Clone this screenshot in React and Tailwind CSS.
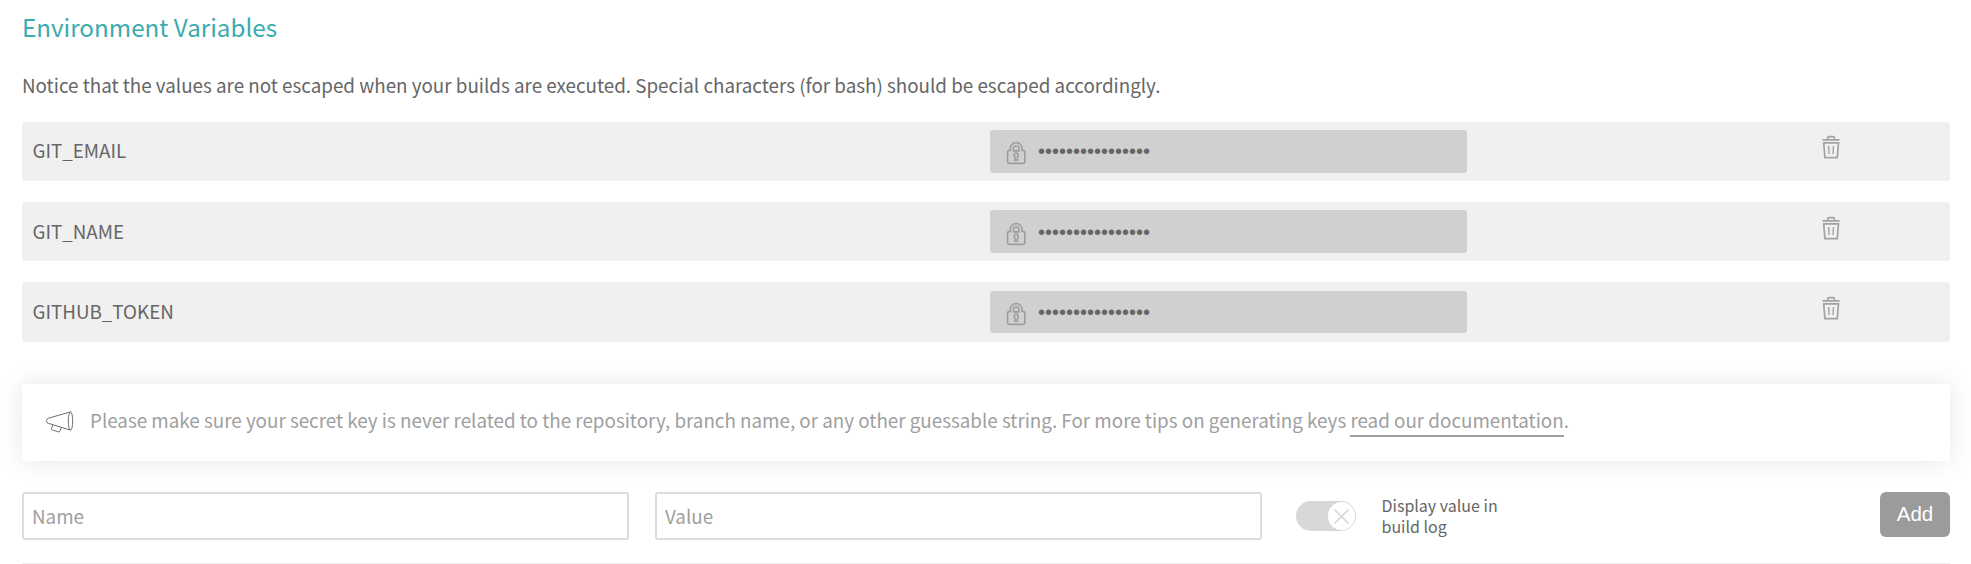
const variables = [
  { name: "GIT_EMAIL", shift: "pt-0", row: "h-[59px]", box: "mt-2 h-[43px]" },
  { name: "GIT_NAME", shift: "pt-px", row: "h-[59px]", box: "mt-2 h-[43px]" },
  { name: "GITHUB_TOKEN", shift: "pt-px", row: "h-[60px]", box: "mt-[9px] h-[42px]", inner: "-mt-px" },
];

function LockIcon() {
  return (
    <svg className="h-[24px] w-[20px] shrink-0" viewBox="0 0 20 24" fill="none" stroke="#9d9d9d" strokeWidth="1.6">
      <path d="M4.4 9.4V7.4a5.8 5.8 0 0 1 11.6 0v2h1a1.8 1.8 0 0 1 1.8 1.8v9.6a1.6 1.6 0 0 1-1.6 1.6H3.2a1.6 1.6 0 0 1-1.6-1.6v-9.6a1.8 1.8 0 0 1 1.8-1.8z" />
      <path d="M7.5 9.9V7.4a2.7 2.7 0 0 1 5.4 0v2.5z" />
      <path d="M9 15.9a2.1 2.1 0 1 1 2.4 0v3.4H9z" />
    </svg>
  );
}

function TrashIcon() {
  return (
    <svg className="h-[24px] w-[18px]" viewBox="0 0 18 24" fill="none" stroke="#a3a3a3" strokeWidth="1.7">
      <path d="M.4 4.9h17.2M5.8 4.9V2.8q0-1.2 1.2-1.2h4.2q1.2 0 1.2 1.2v2.1" />
      <path d="M1.7 7.9h14.8L15.3 22.6H2.9z" />
      <path d="M6.6 11l.5 8M11.5 11l-.5 8" strokeWidth="1.4" />
    </svg>
  );
}

function MegaphoneIcon() {
  return (
    <svg className="mb-px h-[24px] w-[28px] shrink-0" viewBox="0 0 28 24" fill="none" stroke="#6f6f6f" strokeWidth="1" strokeLinejoin="round">
      <path d="M24.6 1.9L2.3 8.2Q.6 8.8.6 10.8t1.7 2.5l22.3 6.8" />
      <ellipse cx="24.5" cy="11" rx="2.2" ry="9.2" />
      <path d="M6.7 14.8l-1.2 3.9q-.3.9.6 1.2l6.5 2q.9.2 1.2-.6l1.6-3.7" />
    </svg>
  );
}

function Field({ placeholder }) {
  return (
    <input
      placeholder={placeholder}
      className="h-12 w-[607px] rounded-[3px] border-2 border-[#dcdcdc] bg-white px-2 pb-px text-[18.8px] text-[#666] outline-none placeholder:text-[#a0a0a0]"
    />
  );
}

export default function App() {
  return (
    <main className="h-[564px] w-[1971px] overflow-hidden bg-white pr-[21px] pl-[22px] font-['Noto_Sans_CJK_SC',sans-serif] text-[18.81px] text-[#666]">
      <h1 className="pt-[7px] text-[24.2px] leading-[40px] text-[#3aabae]">Environment Variables</h1>
      <p className="mt-[23px] leading-[30px]">
        Notice that the values are not escaped when your builds are executed. Special characters (for bash) should be escaped accordingly.
      </p>

      <ul className="mt-[22px] flex flex-col gap-[21px]">
        {variables.map((v) => (
          <li key={v.name} className={`flex items-start rounded-[3px] bg-[#f0f0f0] ${v.row}`}>
            <span className={`w-[968px] pl-[10.5px] leading-[56px] ${v.shift}`}>{v.name}</span>
            <div className={`w-[477px] rounded-[3px] bg-[#d0d0d0] ${v.box}`}>
              <div className={`flex ${v.shift} ${v.inner || ""}`}>
                <div className="pt-[11px] pl-4">
                  <LockIcon />
                </div>
                <span className="pl-3 font-['Liberation_Sans',sans-serif] text-[20px] leading-[43px]">••••••••••••••••</span>
              </div>
            </div>
            <div className={`ml-[355px] ${v.shift}`}>
              <div className="pt-[12.5px]">
                <TrashIcon />
              </div>
            </div>
          </li>
        ))}
      </ul>

      <section className="mt-[42px] flex h-[77px] items-center bg-white pl-6 text-[#a0a0a0] shadow-[0_0_26px_rgba(0,0,0,0.1)]">
        <MegaphoneIcon />
        <p className="pb-[3px] pl-4 leading-[30px]">
          Please make sure your secret key is never related to the repository, branch name, or any other guessable string. For more tips on generating keys{" "}
          <a href="#" className="inline-block h-[32px] border-b-2 border-[#a0a0a0]">read our documentation</a>.
        </p>
      </section>

      <form className="mt-[31px] flex h-[72px] items-start border-b border-[#eee]">
        <Field placeholder="Name" />
        <div className="w-[26px]" />
        <Field placeholder="Value" />
        <div className="mt-[9px] ml-[34px] flex h-[30px] w-[60px] items-center justify-end rounded-full bg-[#d8d8d8] pr-px">
          <div className="flex h-[28px] w-[27px] items-center justify-center rounded-full bg-white">
            <svg className="h-[15px] w-[15px]" viewBox="0 0 15 15" stroke="#d0d0d0" strokeWidth="1.3">
              <path d="M.5.5l14 14M14.5.5l-14 14" />
            </svg>
          </div>
        </div>
        <div className="mt-[3px] ml-[25.5px] w-[140px] text-[16px] leading-[21px]">
          Display value in
          <br />
          build log
        </div>
        <button type="button" className="ml-auto h-[45px] w-[70px] rounded-[6px] bg-[#9b9b9b] font-['Liberation_Sans',sans-serif] text-[20.5px] text-white">
          Add
        </button>
      </form>
    </main>
  );
}
